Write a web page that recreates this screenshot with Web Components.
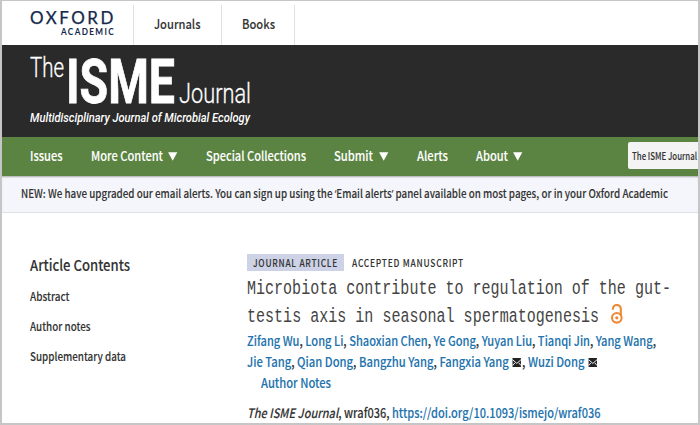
<!DOCTYPE html>
<html lang="en">
<head>
<meta charset="utf-8">
<title>The ISME Journal</title>
<style>
  html, body { margin: 0; }
  body {
    width: 700px;
    height: 425px;
    overflow: hidden;
    background: #fff;
    font-family: "Noto Sans CJK SC", "Open Sans", sans-serif;
    font-weight: 500;
    color: #333;
    -webkit-text-stroke: .1px;
  }
</style>
</head>
<body>
<journal-page></journal-page>

<script>
/**
 * `<fit-text>` — one line of text, condensed or widened to a set measure.
 *
 * @attr {number} w   Width of the line in px
 */
class FitText extends HTMLElement {
  #line;

  constructor() {
    super();
    this.attachShadow({ mode: 'open' }).innerHTML = `
<style>
  :host { display: block; white-space: nowrap; flex: none; }
  span { display: inline-block; transform-origin: 0 50%; vertical-align: top; }
</style>
<span><slot></slot></span>`;
    this.#line = this.shadowRoot.querySelector('span');
  }

  connectedCallback() {
    const w = Number(this.getAttribute('w'));
    this.style.width = `${w}px`;
    const natural = this.#line.getBoundingClientRect().width;
    if (natural) this.#line.style.transform = `scaleX(${w / natural})`;
  }
}

/** `<menu-caret>` — solid down arrow beside a menu label. */
class MenuCaret extends HTMLElement {
  constructor() {
    super();
    this.attachShadow({ mode: 'open' }).innerHTML = `
<style>
  :host { display: block; width: 10px; height: 9px; }
  svg { display: block; }
</style>
<svg width="10" height="9" viewBox="0 0 10 9"><path d="M.1.2h9.2L4.7 8.8z" fill="#fff"/></svg>`;
  }
}

/** `<mail-icon>` — envelope after a corresponding author. */
class MailIcon extends HTMLElement {
  constructor() {
    super();
    this.attachShadow({ mode: 'open' }).innerHTML = `
<style>
  :host { display: inline-block; width: 10.5px; height: 9px; margin: 0 1px; vertical-align: -0.5px; }
  :host(:last-child) { margin-right: 0; }
  svg { display: block; }
</style>
<svg width="10.5" height="9" viewBox="0 0 10.5 9">
  <path d="M0 0h10.5v9H0z" fill="#222"/>
  <path d="M.2 1.6L5.2 5.4l5-3.8M.3 7.6l2.8-2.8M10.2 7.6L7.4 4.8" fill="none" stroke="#fff" stroke-width="1"/>
</svg>`;
  }
}

/** `<open-access>` — the orange open padlock. */
class OpenAccess extends HTMLElement {
  constructor() {
    super();
    this.attachShadow({ mode: 'open' }).innerHTML = `
<style>
  :host { display: block; width: 12px; height: 20px; }
  svg { display: block; }
</style>
<svg width="12" height="20" viewBox="0 0 12 20" fill="none" stroke="#ec8a35" stroke-width="2.1">
  <circle cx="5.8" cy="13.8" r="4.8"/>
  <path d="M1.9 5.8V4.9a3.9 3.9 0 0 1 7.9 0v7"/>
  <circle cx="5.8" cy="13.8" r="1.6" fill="#ec8a35" stroke="none"/>
</svg>`;
  }
}

class TopBar extends HTMLElement {
  constructor() {
    super();
    this.attachShadow({ mode: 'open' }).innerHTML = `
<style>
  :host { display: flex; height: 43.5px; background: #fff; font-size: 12.8px; }
  .brand { width: 83px; padding: 8.5px 20px 0 28px; color: #14284b; }
  .oxford { font: 400 16.5px/17px Lato, sans-serif; letter-spacing: 2.5px; -webkit-text-stroke: .25px; }
  .academic { font: 700 9.6px/12px Lato, sans-serif; letter-spacing: 1.6px; margin: -1px 0 0 30.5px; -webkit-text-stroke: 0; }
  .tab { box-sizing: border-box; margin-top: 3px; border-left: 1px solid #e0e0e0; padding-left: 20px; line-height: 38px; }
  .journals { width: 87.5px; }
  .books { width: 73.5px; }
  .end { padding: 0; }
</style>
<div class="brand">
  <fit-text class="oxford" w="86">OXFORD</fit-text>
  <fit-text class="academic" w="54">ACADEMIC</fit-text>
</div>
<div class="tab journals"><fit-text w="46.5">Journals</fit-text></div>
<div class="tab books"><fit-text w="33">Books</fit-text></div>
<div class="tab end"></div>`;
  }
}

class JournalMasthead extends HTMLElement {
  constructor() {
    super();
    this.attachShadow({ mode: 'open' }).innerHTML = `
<style>
  :host { display: block; height: 92px; box-sizing: border-box; padding: 5px 0 0 28px; background: #2a2a2a; color: #fff; }
  .logo { display: flex; font-family: Roboto, sans-serif; height: 60px; }
  .the { font-size: 27px; font-weight: 300; line-height: 37px; }
  .isme { font-size: 62px; font-weight: 700; line-height: 62px; margin: .5px 0 0 2px; -webkit-text-stroke: .8px; }
  .journal { font-size: 27px; font-weight: 300; line-height: 36px; margin: 25.5px 0 0 4px; }
  .the, .journal { -webkit-text-stroke: .3px; }
  .tagline { font: italic 500 12.5px/16px Roboto, sans-serif; margin-top: -.5px; -webkit-text-stroke: 0; }
</style>
<div class="logo">
  <fit-text class="the" w="34">The</fit-text>
  <fit-text class="isme" w="109">ISME</fit-text>
  <fit-text class="journal" w="72">Journal</fit-text>
</div>
<fit-text class="tagline" w="220">Multidisciplinary Journal of Microbial Ecology</fit-text>`;
  }
}

class JournalNav extends HTMLElement {
  constructor() {
    super();
    this.attachShadow({ mode: 'open' }).innerHTML = `
<style>
  :host { display: flex; align-items: center; height: 38.5px; padding-left: 28px; background: #5b8442; color: #fff; font-size: 13px; line-height: 20px; }
  nav { display: flex; align-items: center; gap: 28px; width: 599px; }
  div { display: flex; align-items: center; gap: 5.5px; }
  .scope { box-sizing: border-box; width: 70px; height: 27px; padding-left: 3.5px; border-radius: 2px 0 0 2px; background: #f4f4f4; color: #333; font-size: 10.3px; line-height: 26px; margin-bottom: 1px; }
</style>
<nav>
  <fit-text w="32.5">Issues</fit-text>
  <div><fit-text w="72">More Content</fit-text><menu-caret></menu-caret></div>
  <fit-text w="100">Special Collections</fit-text>
  <div><fit-text w="39">Submit</fit-text><menu-caret></menu-caret></div>
  <fit-text w="31">Alerts</fit-text>
  <div><fit-text w="32">About</fit-text><menu-caret></menu-caret></div>
</nav>
<div class="scope"><fit-text w="65">The ISME Journal</fit-text></div>`;
  }
}

class SiteNotice extends HTMLElement {
  constructor() {
    super();
    this.attachShadow({ mode: 'open' }).innerHTML = `
<style>
  :host { display: block; height: 37px; box-sizing: border-box; padding-left: 19px; background: #f5f6fb; border-bottom: 1px solid #dfe1e6; box-shadow: inset 0 2px 2px -1px #a5aaa8; font-size: 11.3px; line-height: 35.5px; }
  /* The CJK face sets curly quotes full width. */
  .q { font-family: "Open Sans", sans-serif; }
</style>
<fit-text w="647">NEW: We have upgraded our email alerts. You can sign up using the <span class="q">‘</span>Email alerts<span class="q">’</span> panel available on most pages, or in your Oxford Academic</fit-text>`;
  }
}

class ArticleContents extends HTMLElement {
  constructor() {
    super();
    this.attachShadow({ mode: 'open' }).innerHTML = `
<style>
  :host { display: block; font-size: 11.3px; line-height: 30px; }
  .heading { font-size: 15px; line-height: 20px; margin: 1px 0 5.5px; }
</style>
<fit-text class="heading" w="100">Article Contents</fit-text>
<fit-text w="39.5">Abstract</fit-text>
<fit-text w="60.5">Author notes</fit-text>
<fit-text w="96">Supplementary data</fit-text>`;
  }
}

class ArticleHeader extends HTMLElement {
  constructor() {
    super();
    this.attachShadow({ mode: 'open' }).innerHTML = `
<style>
  :host { display: block; font-size: 13px; line-height: 21px; }
  a { color: #2273ad; }
  .labels { display: flex; gap: 8px; height: 17px; font-size: 10px; line-height: 17.5px; letter-spacing: .9px; }
  .type { padding: 0 6px; background: #cdd2e7; }
  .title { margin: 5px 0 -1.5px; font: 400 19.5px/27.5px "Liberation Mono", monospace; color: #444; -webkit-text-stroke: 0; }
  .last { display: flex; gap: 11.5px; }
  .notes { margin-left: 14px; }
  .cite { margin-top: 9.5px; }
</style>
<div class="labels">
  <div class="type"><fit-text w="85">JOURNAL ARTICLE</fit-text></div>
  <fit-text w="112">ACCEPTED MANUSCRIPT</fit-text>
</div>
<div class="title">
  <fit-text w="424">Microbiota contribute to regulation of the gut-</fit-text>
  <div class="last"><fit-text w="352">testis axis in seasonal spermatogenesis</fit-text><open-access></open-access></div>
</div>
<fit-text w="409"><a>Zifang Wu</a>, <a>Long Li</a>, <a>Shaoxian Chen</a>, <a>Ye Gong</a>, <a>Yuyan Liu</a>, <a>Tianqi Jin</a>, <a>Yang Wang</a>,</fit-text>
<fit-text w="350"><a>Jie Tang</a>, <a>Qian Dong</a>, <a>Bangzhu Yang</a>, <a>Fangxia Yang</a> <mail-icon></mail-icon>, <a>Wuzi Dong</a> <mail-icon></mail-icon></fit-text>
<fit-text class="notes" w="70"><a>Author Notes</a></fit-text>
<fit-text class="cite" w="353.5"><i>The ISME Journal</i>, wraf036, <a>https://doi.org/10.1093/ismejo/wraf036</a></fit-text>`;
  }
}

class JournalPage extends HTMLElement {
  constructor() {
    super();
    this.attachShadow({ mode: 'open' }).innerHTML = `
<style>
  :host { display: block; box-sizing: border-box; width: 700px; height: 425px; overflow: hidden; border: solid #c6c6c6; border-width: 1px 2px 2px; padding-top: .5px; background: #fff; }
  main { display: flex; padding: 41.5px 0 0 28px; }
  article-contents { width: 217px; }
</style>
<top-bar></top-bar>
<journal-masthead></journal-masthead>
<journal-nav></journal-nav>
<site-notice></site-notice>
<main>
  <article-contents></article-contents>
  <article-header></article-header>
</main>`;
  }
}

// Icons go first so that fit-text measures lines with them in place.
customElements.define('menu-caret', MenuCaret);
customElements.define('mail-icon', MailIcon);
customElements.define('open-access', OpenAccess);
customElements.define('top-bar', TopBar);
customElements.define('journal-masthead', JournalMasthead);
customElements.define('journal-nav', JournalNav);
customElements.define('site-notice', SiteNotice);
customElements.define('article-contents', ArticleContents);
customElements.define('article-header', ArticleHeader);
customElements.define('journal-page', JournalPage);
customElements.define('fit-text', FitText);
</script>
</body>
</html>
